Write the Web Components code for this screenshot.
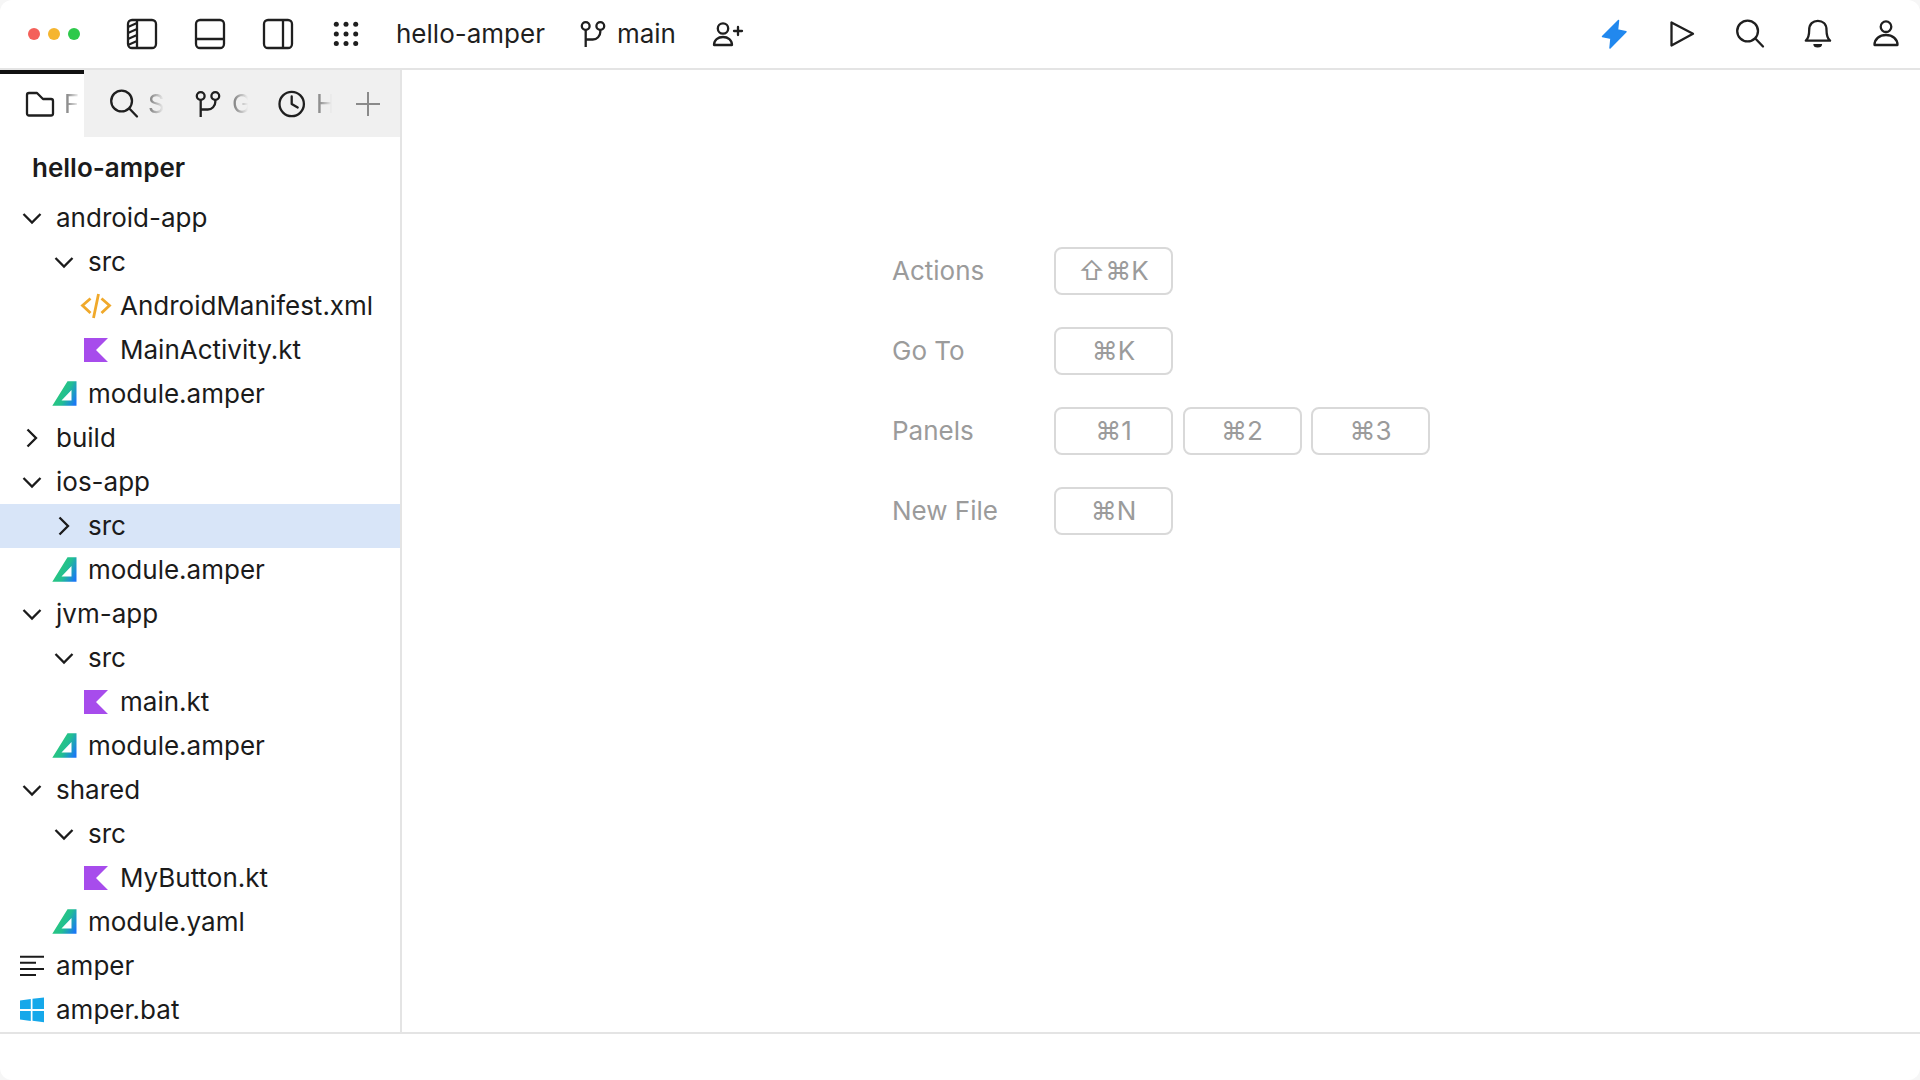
<!DOCTYPE html>
<html lang="en">
<head>
<meta charset="utf-8">
<title>hello-amper</title>
<style>
  html, body { margin: 0; background: #f6f6f6; }
  body { font-family: Inter, "DejaVu Sans", sans-serif; color: #1b1b1b; }
</style>
</head>
<body>
<ide-app>
  <top-bar slot="top"></top-bar>
  <side-panel slot="side">
    <tree-row level="0" icon="down">android-app</tree-row>
    <tree-row level="1" icon="down">src</tree-row>
    <tree-row level="2" icon="xml">AndroidManifest.xml</tree-row>
    <tree-row level="2" icon="kotlin">MainActivity.kt</tree-row>
    <tree-row level="1" icon="amper">module.amper</tree-row>
    <tree-row level="0" icon="right">build</tree-row>
    <tree-row level="0" icon="down">ios-app</tree-row>
    <tree-row level="1" icon="right" selected>src</tree-row>
    <tree-row level="1" icon="amper">module.amper</tree-row>
    <tree-row level="0" icon="down">jvm-app</tree-row>
    <tree-row level="1" icon="down">src</tree-row>
    <tree-row level="2" icon="kotlin">main.kt</tree-row>
    <tree-row level="1" icon="amper">module.amper</tree-row>
    <tree-row level="0" icon="down">shared</tree-row>
    <tree-row level="1" icon="down">src</tree-row>
    <tree-row level="2" icon="kotlin">MyButton.kt</tree-row>
    <tree-row level="1" icon="amper">module.yaml</tree-row>
    <tree-row level="0" icon="lines">amper</tree-row>
    <tree-row level="0" icon="windows">amper.bat</tree-row>
  </side-panel>
  <shortcut-list slot="main">
    <shortcut-row label="Actions"><key-cap>⇧⌘K</key-cap></shortcut-row>
    <shortcut-row label="Go To"><key-cap>⌘K</key-cap></shortcut-row>
    <shortcut-row label="Panels"><key-cap>⌘1</key-cap><key-cap>⌘2</key-cap><key-cap>⌘3</key-cap></shortcut-row>
    <shortcut-row label="New File"><key-cap>⌘N</key-cap></shortcut-row>
  </shortcut-list>
</ide-app>

<script>
const icons = {
  panelLeft: `<rect x="2" y="2" width="28" height="28" rx="4" fill="none" stroke="currentColor" stroke-width="2.300"/>
    <path d="M11 2v28" stroke="currentColor" stroke-width="2.300"/>
    <path d="M2 9l9-4M2 15l9-4M2 21l9-4M2 27l9-4" stroke="currentColor" stroke-width="2"/>`,
  panelBottom: `<rect x="2" y="2" width="28" height="28" rx="4" fill="none" stroke="currentColor" stroke-width="2.300"/>
    <path d="M2 21h28" stroke="currentColor" stroke-width="2.300"/>`,
  panelRight: `<rect x="2" y="2" width="28" height="28" rx="4" fill="none" stroke="currentColor" stroke-width="2.300"/>
    <path d="M21 2v28" stroke="currentColor" stroke-width="2.300"/>`,
  grid: `<g fill="currentColor">
    <circle cx="6.300" cy="6.300" r="2.500"/><circle cx="16" cy="6.300" r="2.500"/><circle cx="25.700" cy="6.300" r="2.500"/>
    <circle cx="6.300" cy="16" r="2.500"/><circle cx="16" cy="16" r="2.500"/><circle cx="25.700" cy="16" r="2.500"/>
    <circle cx="6.300" cy="25.600" r="2.500"/><circle cx="16" cy="25.600" r="2.500"/><circle cx="25.700" cy="25.600" r="2.500"/></g>`,
  branch: `<g fill="none" stroke="currentColor" stroke-width="2.300">
    <circle cx="7.700" cy="8" r="3.900"/><circle cx="22.300" cy="8" r="3.900"/>
    <path d="M7.700 12v17M22.300 12v2a7.500 7.500 0 0 1-7.500 7.500H7.700"/></g>`,
  userPlus: `<g fill="none" stroke="currentColor" stroke-width="2.300" stroke-linejoin="round" stroke-linecap="round">
    <circle cx="11" cy="10.500" r="5.200"/><path d="M2 27c0-5 4-8 9-8s9 3 9 8z"/><path d="M26 9v8M22 13h8"/></g>`,
  bolt: `<path d="M20.500 2.500L4.500 18.500 13 20.300 12 30 28 13.700 19.500 12z" fill="#2188ee" stroke="#2188ee" stroke-width="1.500" stroke-linejoin="round"/>`,
  play: `<path d="M5.500 4.500v23L27 15.700z" fill="none" stroke="currentColor" stroke-width="2.300" stroke-linejoin="round"/>`,
  search: `<g fill="none" stroke="currentColor" stroke-width="2.300" stroke-linecap="round">
    <circle cx="13.600" cy="13" r="10.400"/><path d="M21.800 21l7.200 7.500"/></g>`,
  bell: `<path d="M3.800 22.700C7 20 7.200 15 7.200 12 7.200 6 11 2.800 15.800 2.800S24.500 6 24.500 12c0 3 .3 8 3.600 10.700z" fill="none" stroke="currentColor" stroke-width="2.300" stroke-linejoin="round"/>
    <path d="M11.300 26h8.800a4.400 3.600 0 0 1-8.800 0z" fill="currentColor"/>`,
  user: `<g fill="none" stroke="currentColor" stroke-width="2.300" stroke-linejoin="round">
    <circle cx="16" cy="8.700" r="5.300"/><path d="M4.500 27c0-6 5-10 11.500-10s11.500 4 11.500 10z"/></g>`,
  folder: `<path d="M3 7a2 2 0 0 1 2-2h8l6 6h8a2 2 0 0 1 2 2v12.500a2 2 0 0 1-2 2H5a2 2 0 0 1-2-2z" fill="none" stroke="currentColor" stroke-width="2.300" stroke-linejoin="round"/>`,
  clock: `<g fill="none" stroke="currentColor" stroke-width="2.300" stroke-linecap="round" stroke-linejoin="round">
    <circle cx="15.700" cy="16" r="12.200"/><path d="M15.700 8.500V16l6 3.500"/></g>`,
  plus: `<path d="M16 4v24M4 16h24" stroke="#8a8a8a" stroke-width="2"/>`,
  down: `<path d="M7.500 12l8.500 8.500L24.500 12" fill="none" stroke="currentColor" stroke-width="2.300"/>`,
  right: `<path d="M11.500 7.500l8.500 8.500-8.500 8.500" fill="none" stroke="currentColor" stroke-width="2.300"/>`,
  xml: `<g fill="none" stroke="#f0a92b" stroke-width="2.800">
    <path d="M10.500 8.500L2.500 15.500l8 7.500M21.500 8.500l8 7-8 7.500M18.500 4l-5 24"/></g>`,
  kotlin: `<path d="M4 4h24L16 16l12 12H4z" fill="#a74cec"/>`,
  amper: `<defs><linearGradient id="ag" x1="0" y1=".3" x2="1" y2=".8">
      <stop offset="0" stop-color="#2ecb70"/><stop offset=".55" stop-color="#22bf92"/><stop offset="1" stop-color="#1a78f5"/></linearGradient></defs>
    <path d="M19.500 3.300h9v24.400H4.300zM23.500 12l-10 10.500h10z" fill="url(#ag)" fill-rule="evenodd"/>`,
  lines: `<path d="M4 6.700h24M4 12.700h16M4 19h24M4 25h16" stroke="currentColor" stroke-width="2"/>`,
  windows: `<path d="M4 6.500l10.800-1.500v10H4zM16.500 4.700L28 3.500v11.500H16.500zM4 17h10.800v10L4 25.500zM16.500 17H28v11.300l-11.500-1.500z" fill="#16a8ea"/>`
};

class IdeIcon extends HTMLElement {
  connectedCallback() {
    const name = this.getAttribute('name');
    this.attachShadow({mode: 'open'}).innerHTML = `
      <style>
        :host { display: block; width: 32px; height: 32px; flex: none; }
        svg { display: block; }
      </style>
      <svg width="32" height="32" viewBox="0 0 32 32">${icons[name]}</svg>`;
  }
}

class IdeApp extends HTMLElement {
  constructor() {
    super();
    this.attachShadow({mode: 'open'}).innerHTML = `
      <style>
        :host { display: flex; flex-direction: column; width: 1920px; height: 1080px; overflow: hidden; background: #fff; border-radius: 12px; }
        .top { flex: none; height: 68px; border-bottom: 2px solid #e4e4e4; }
        .body { flex: none; display: flex; height: 962px; }
        .side { flex: none; width: 400px; border-right: 2px solid #e4e4e4; }
        .main { flex: 1; }
        .bottom { flex: 1; border-top: 2px solid #e4e4e4; }
      </style>
      <div class="top"><slot name="top"></slot></div>
      <div class="body">
        <div class="side"><slot name="side"></slot></div>
        <div class="main"><slot name="main"></slot></div>
      </div>
      <div class="bottom"></div>`;
  }
}

class TopBar extends HTMLElement {
  constructor() {
    super();
    this.attachShadow({mode: 'open'}).innerHTML = `
      <style>
        :host { display: flex; align-items: center; height: 68px; padding: 0 18px 0 28px; font-size: 26px; color: #1f1f1f; }
        .lights { display: flex; gap: 8px; margin-right: 46px; }
        .lights i { width: 12px; height: 12px; border-radius: 50%; }
        .icons { display: flex; gap: 36px; }
        .project { margin: 0 0 2px 34px; }
        .branch { display: flex; align-items: center; gap: 7px; margin-left: 33px; }
        .branch span { margin-bottom: 2px; }
        .invite { margin-left: 36px; }
        .right { margin-left: auto; }
      </style>
      <div class="lights">
        <i style="background:#f4605a"></i><i style="background:#f5b52f"></i><i style="background:#2ec94b"></i>
      </div>
      <div class="icons">
        <ide-icon name="panelLeft"></ide-icon>
        <ide-icon name="panelBottom"></ide-icon>
        <ide-icon name="panelRight"></ide-icon>
        <ide-icon name="grid"></ide-icon>
      </div>
      <span class="project">hello-amper</span>
      <div class="branch"><ide-icon name="branch"></ide-icon><span>main</span></div>
      <ide-icon class="invite" name="userPlus"></ide-icon>
      <div class="icons right">
        <ide-icon name="bolt"></ide-icon>
        <ide-icon name="play"></ide-icon>
        <ide-icon name="search"></ide-icon>
        <ide-icon name="bell"></ide-icon>
        <ide-icon name="user"></ide-icon>
      </div>`;
  }
}

class SideTab extends HTMLElement {
  constructor() {
    super();
    this.attachShadow({mode: 'open'}).innerHTML = `
      <style>
        :host { display: flex; align-items: center; gap: 8px; width: 84px; box-sizing: border-box; padding-left: 24px; overflow: hidden; color: #1f1f1f; }
        :host([active]) { background: #fff; box-shadow: inset 0 4px 0 #111; }
        span { width: 20px; color: #8a8a8a; font-size: 26px; overflow: hidden;
               -webkit-mask-image: linear-gradient(90deg, #000 15%, transparent 80%); mask-image: linear-gradient(90deg, #000 15%, transparent 80%); }
      </style>
      <ide-icon name="${this.getAttribute('icon')}"></ide-icon><span><slot></slot></span>`;
  }
}

class SidePanel extends HTMLElement {
  constructor() {
    super();
    this.attachShadow({mode: 'open'}).innerHTML = `
      <style>
        :host { display: block; width: 400px; font-size: 26px; }
        .tabs { display: flex; height: 67px; background: #f0f0f0; }
        .add { display: flex; align-items: center; padding-left: 16px; }
        h2 { margin: 9px 0 6px; padding-left: 32px; height: 44px; line-height: 44px; font-size: 26px; font-weight: 600; }
      </style>
      <div class="tabs">
        <side-tab icon="folder" active>F</side-tab>
        <side-tab icon="search" style="padding-left:24px">S</side-tab>
        <side-tab icon="branch" style="padding-left:25px;gap:7px">G</side-tab>
        <side-tab icon="clock">H</side-tab>
        <div class="add"><ide-icon name="plus"></ide-icon></div>
      </div>
      <h2>hello-amper</h2>
      <slot></slot>`;
  }
}

class TreeRow extends HTMLElement {
  constructor() {
    super();
    const level = Number(this.getAttribute('level'));
    this.attachShadow({mode: 'open'}).innerHTML = `
      <style>
        :host { display: flex; align-items: center; gap: 8px; height: 44px; padding-left: ${16 + level * 32}px; font-size: 26px; color: #1b1b1b; }
        :host([selected]) { background: #d8e5f8; }
        span { margin-bottom: 2px; }
      </style>
      <ide-icon name="${this.getAttribute('icon')}"></ide-icon><span><slot></slot></span>`;
  }
}

class ShortcutList extends HTMLElement {
  constructor() {
    super();
    this.attachShadow({mode: 'open'}).innerHTML = `
      <style>
        :host { display: flex; flex-direction: column; gap: 32.5px; padding: 177px 0 0 490px; }
      </style>
      <slot></slot>`;
  }
}

class ShortcutRow extends HTMLElement {
  constructor() {
    super();
    this.attachShadow({mode: 'open'}).innerHTML = `
      <style>
        :host { display: flex; align-items: center; font-size: 26px; color: #9b9b9b; }
        .label { width: 162px; }
        .keys { display: flex; gap: 9.5px; }
      </style>
      <span class="label">${this.getAttribute('label')}</span>
      <div class="keys"><slot></slot></div>`;
  }
}

class KeyCap extends HTMLElement {
  constructor() {
    super();
    this.attachShadow({mode: 'open'}).innerHTML = `
      <style>
        :host { display: flex; align-items: center; justify-content: center; box-sizing: border-box; width: 119px; height: 47.5px;
                border: 2px solid #d9d9d9; border-radius: 8px; font-size: 26px; color: #9b9b9b; }
      </style>
      <slot></slot>`;
  }
}

customElements.define('ide-icon', IdeIcon);
customElements.define('ide-app', IdeApp);
customElements.define('top-bar', TopBar);
customElements.define('side-tab', SideTab);
customElements.define('side-panel', SidePanel);
customElements.define('tree-row', TreeRow);
customElements.define('shortcut-list', ShortcutList);
customElements.define('shortcut-row', ShortcutRow);
customElements.define('key-cap', KeyCap);
</script>
</body>
</html>
